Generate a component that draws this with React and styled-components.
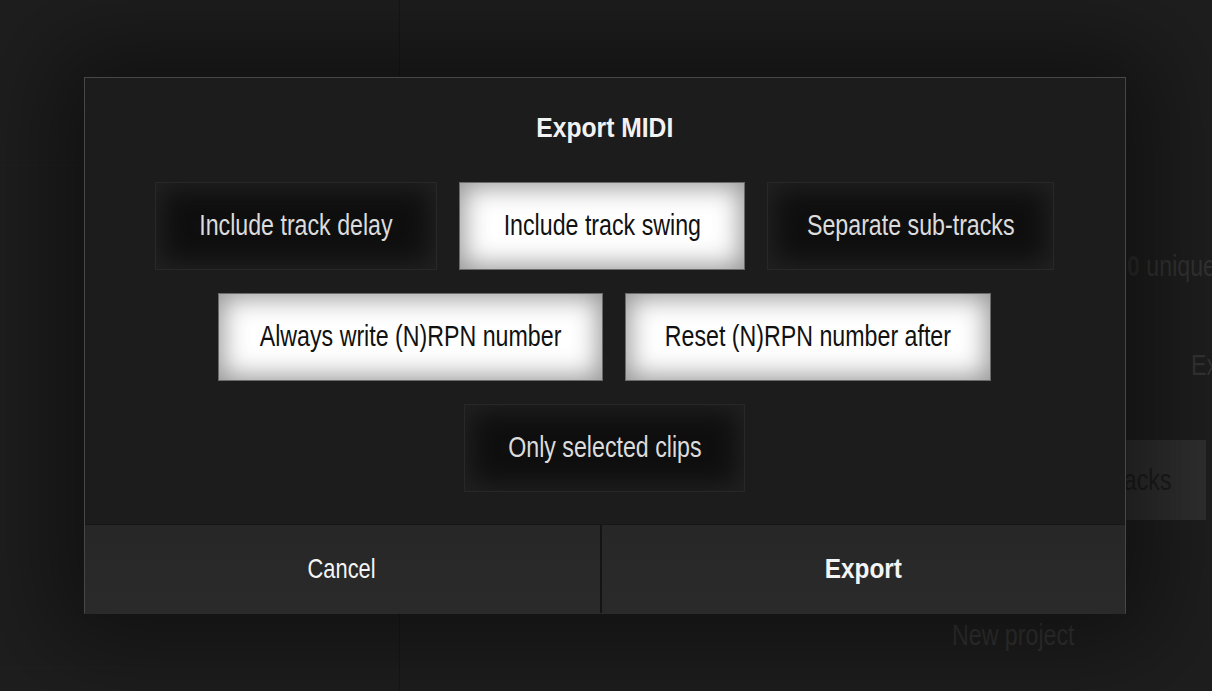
import React, { useState } from 'react';
import styled, { createGlobalStyle, css } from 'styled-components';

const GlobalStyle = createGlobalStyle`
  html, body {
    margin: 0;
    padding: 0;
    background: #1d1d1d;
    overflow: hidden;
  }
  * { box-sizing: border-box; }
`;

const font = `"Liberation Sans", Arial, sans-serif`;

// narrow look of the app's condensed face
const Label = styled.span`
  display: inline-block;
  white-space: nowrap;
  transform: scaleX(${({ sx }) => sx || 0.8});
  transform-origin: ${({ origin }) => origin || 'center'};
`;

const Screen = styled.div`
  position: relative;
  width: 1212px;
  height: 691px;
  display: grid;
  grid-template-columns: 400px 1fr;
  background: #1e1e1e;
  font-family: ${font};
  overflow: hidden;
`;

const SidePane = styled.div`
  border-right: 1px solid #171717;
  display: flex;
  flex-direction: column;
`;

const SideRow = styled.div`
  height: ${({ h }) => h}px;
  border-bottom: 1px solid #202020;
`;

const MainPane = styled.div`
  display: flex;
  flex-direction: column;
  align-items: flex-start;
  padding-top: 248px;
  min-width: 0;
`;

const GhostText = styled.div`
  color: #333;
  font-size: 29px;
  line-height: 36px;
  white-space: nowrap;
  margin-left: ${({ left }) => left}px;
  margin-top: ${({ top }) => top || 0}px;
  b { color: #2b2b2b; }
`;

const GhostButton = styled.div`
  width: 327px;
  height: 80px;
  margin: 57px 0 0 479px;
  background: linear-gradient(90deg, #2a2a2a, #2f2f2f);
  color: #1c1c1c;
  font-size: 29px;
  display: flex;
  align-items: center;
  justify-content: center;
  padding-left: 50px;
`;

const Backdrop = styled.div`
  position: absolute;
  inset: 0;
  display: flex;
  align-items: center;
  justify-content: center;
`;

const Dialog = styled.div`
  width: 1042px;
  height: 537px;
  margin: -1px 0 0 -3px;
  background: #1c1c1c;
  border: 1px solid #474747;
  border-bottom-color: #2a2a2a;
  box-shadow: 0 0 90px 30px rgba(0, 0, 0, 0.45);
  display: flex;
  flex-direction: column;
`;

const Body = styled.div`
  flex: 1;
  display: flex;
  flex-direction: column;
  align-items: center;
  padding-top: 32px;
  gap: 23px;
`;

const Title = styled.h1`
  margin: 0 0 13px;
  font-family: ${font};
  font-size: 28px;
  line-height: 36px;
  font-weight: 700;
  color: #f2f2f2;
`;

const Row = styled.div`
  display: flex;
  gap: 22px;
`;

const Toggle = styled.button`
  width: ${({ w }) => w}px;
  height: 88px;
  padding: 0;
  display: flex;
  align-items: center;
  justify-content: center;
  font-family: ${font};
  font-size: 29px;
  cursor: pointer;
  outline: none;
  ${({ on }) =>
    on
      ? css`
          background: #ffffff;
          color: #111;
          border: 1px solid #6a6a6a;
          box-shadow: inset 0 0 26px 4px rgba(0, 0, 0, 0.42);
        `
      : css`
          background: #0f0f0f;
          color: #dcdcdc;
          border: 1px solid #282828;
          box-shadow: inset 0 0 26px 6px #222;
        `}
`;

const Footer = styled.div`
  height: 89px;
  display: flex;
  border-top: 1px solid #161616;
  background: #141414;
  gap: 2px;
`;

const FooterButton = styled.button`
  flex: ${({ primary }) => (primary ? '1 1 0' : '0 0 515px')};
  border: none;
  padding: 0;
  background: linear-gradient(#272727, #2a2a2a);
  color: #f4f4f4;
  font-family: ${font};
  font-size: 28px;
  font-weight: ${({ primary }) => (primary ? 700 : 400)};
  cursor: pointer;
`;

const options = [
  [
    { key: 'delay', label: 'Include track delay', w: 282 },
    { key: 'swing', label: 'Include track swing', w: 286 },
    { key: 'sub', label: 'Separate sub-tracks', w: 287 },
  ],
  [
    { key: 'always', label: 'Always write (N)RPN number', w: 385 },
    { key: 'reset', label: 'Reset (N)RPN number after', w: 366 },
  ],
  [{ key: 'selected', label: 'Only selected clips', w: 281 }],
];

export default function App() {
  const [state, setState] = useState({
    delay: false,
    swing: true,
    sub: false,
    always: true,
    reset: true,
    selected: false,
  });

  const flip = (k) => setState((s) => ({ ...s, [k]: !s[k] }));

  return (
    <>
      <GlobalStyle />
      <Screen>
        <SidePane>
          <SideRow h={166} />
          <SideRow h={502} />
        </SidePane>
        <MainPane>
          <GhostText left={727}>
            <Label origin="left">
              <b>0</b> unique notes
            </Label>
          </GhostText>
          <GhostText left={791} top={63}>
            <Label origin="left">Export</Label>
          </GhostText>
          <GhostButton>
            <Label>Separate sub-tracks</Label>
          </GhostButton>
          <GhostText left={552} top={97}>
            <Label origin="left">New project</Label>
          </GhostText>
        </MainPane>
        <Backdrop>
          <Dialog>
            <Body>
              <Title>
                <Label sx={0.88}>Export MIDI</Label>
              </Title>
              {options.map((row, i) => (
                <Row key={i}>
                  {row.map((o) => (
                    <Toggle key={o.key} w={o.w} on={state[o.key] ? 1 : 0} onClick={() => flip(o.key)}>
                      <Label>{o.label}</Label>
                    </Toggle>
                  ))}
                </Row>
              ))}
            </Body>
            <Footer>
              <FooterButton>
                <Label sx={0.78}>Cancel</Label>
              </FooterButton>
              <FooterButton primary={1}>
                <Label sx={0.87}>Export</Label>
              </FooterButton>
            </Footer>
          </Dialog>
        </Backdrop>
      </Screen>
    </>
  );
}
